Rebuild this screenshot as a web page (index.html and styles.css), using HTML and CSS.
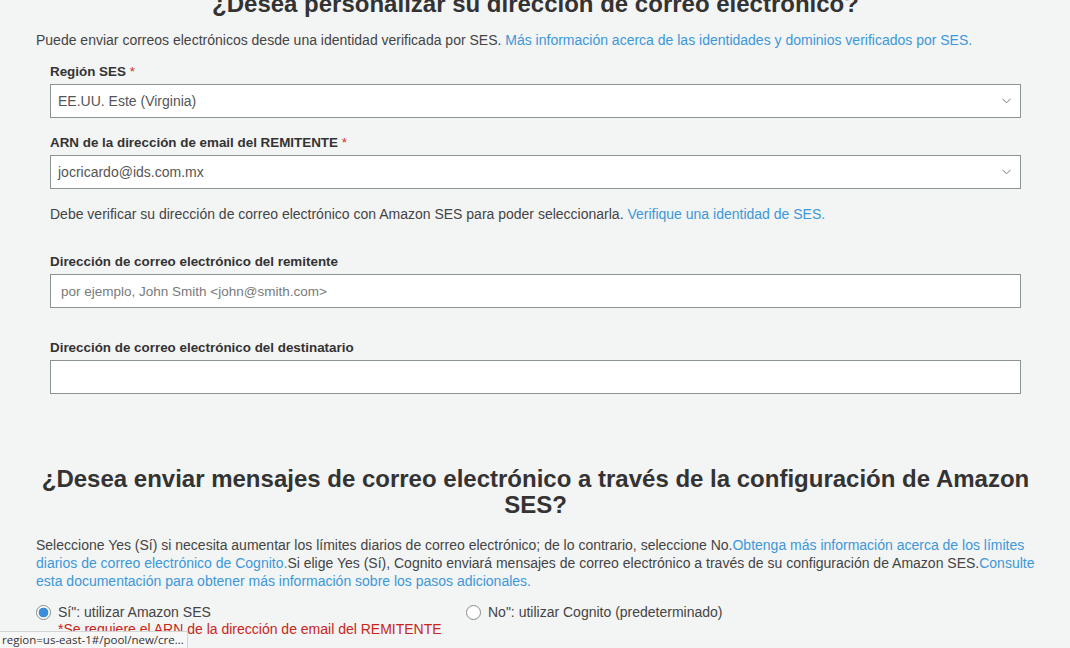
FILE: index.html
```html
<!DOCTYPE html>
<html lang="es">
<head>
<meta charset="utf-8">
<title>Cognito - correo electrónico</title>
<link rel="stylesheet" href="styles.css">
</head>
<body>
<div class="page">
  <section class="sec sec-custom">
    <h2 class="sec-title">¿Desea personalizar su dirección de correo electrónico?</h2>
    <p class="desc">Puede enviar correos electrónicos desde una identidad verificada por SES. <a class="link" href="#">Más información acerca de las identidades y dominios verificados por SES.</a></p>
    <div class="fields">
      <div class="field">
        <label class="label">Región SES <span class="req">*</span></label>
        <div class="control select">
          <span class="value">EE.UU. Este (Virginia)</span>
          <svg class="chev" width="9" height="6" viewBox="0 0 9 6"><polyline points="0.5,0.8 4.5,4.8 8.5,0.8" fill="none" stroke="#777" stroke-width="1"/></svg>
        </div>
      </div>
      <div class="field">
        <label class="label">ARN de la dirección de email del REMITENTE <span class="req">*</span></label>
        <div class="control select">
          <span class="value">jocricardo@ids.com.mx</span>
          <svg class="chev" width="9" height="6" viewBox="0 0 9 6"><polyline points="0.5,0.8 4.5,4.8 8.5,0.8" fill="none" stroke="#777" stroke-width="1"/></svg>
        </div>
      </div>
      <p class="help">Debe verificar su dirección de correo electrónico con Amazon SES para poder seleccionarla. <a class="link" href="#">Verifique una identidad de SES.</a></p>
      <div class="field field-wide">
        <label class="label">Dirección de correo electrónico del remitente</label>
        <input class="control input" type="text" placeholder="por ejemplo, John Smith &lt;john@smith.com&gt;">
      </div>
      <div class="field field-wide">
        <label class="label">Dirección de correo electrónico del destinatario</label>
        <input class="control input" type="text">
      </div>
    </div>
  </section>

  <section class="sec sec-ses">
    <h2 class="sec-title">¿Desea enviar mensajes de correo electrónico a través de la configuración de Amazon SES?</h2>
    <p class="desc desc-long">Seleccione Yes (Sí) si necesita aumentar los límites diarios de correo electrónico; de lo contrario, seleccione No.<a class="link" href="#">Obtenga más información acerca de los límites diarios de correo electrónico de Cognito.</a>Si elige Yes (Sí), Cognito enviará mensajes de correo electrónico a través de su configuración de Amazon SES.<a class="link" href="#">Consulte esta documentación para obtener más información sobre los pasos adicionales.</a></p>
    <div class="radios">
      <div class="radio-col radio-col-first">
        <label class="radio"><input type="radio" name="ses" checked><span>Sí": utilizar Amazon SES</span></label>
        <div class="error">*Se requiere el ARN de la dirección de email del REMITENTE</div>
      </div>
      <div class="radio-col">
        <label class="radio"><input type="radio" name="ses"><span>No": utilizar Cognito (predeterminado)</span></label>
      </div>
    </div>
  </section>
</div>
<div class="status">region=us-east-1#/pool/new/cre...</div>
</body>
</html>
```

FILE: styles.css
```css
html, body {
  margin: 0;
  padding: 0;
  background: #f3f4f4;
  height: 100%;
  overflow: hidden;
}

body {
  font-family: "Liberation Sans", Arial, sans-serif;
  color: #444;
  font-size: 14px;
}

.page {
  padding: 0 35px 0 36px;
  margin-top: -9px;
}

.sec-title {
  margin: 0;
  font-size: 24px;
  line-height: 26px;
  font-weight: bold;
  color: #333;
  text-align: center;
}

.desc {
  margin: 14px 0 0;
  line-height: 18px;
  color: #444;
}

.link {
  color: #3c98d8;
  text-decoration: none;
}

.fields {
  padding: 0 14px;
  margin-top: 14px;
}

.field {
  display: flex;
  flex-direction: column;
  margin-bottom: 16px;
}

.field-wide {
  margin-bottom: 31px;
}

.label {
  font-weight: bold;
  font-size: 13.4px;
  line-height: 18px;
  color: #333;
  margin-bottom: 3px;
}

.req {
  color: #d13212;
  font-weight: normal;
}

.control {
  box-sizing: border-box;
  height: 34px;
  border: 1px solid #8b9394;
  background: #fff;
  font-family: "Liberation Sans", Arial, sans-serif;
  font-size: 14px;
  color: #555;
}

.select {
  display: flex;
  align-items: center;
  justify-content: space-between;
  padding: 0 9px 0 7px;
}

.chev {
  display: block;
}

.input {
  width: 100%;
  padding: 0 10px;
  outline: none;
}

.input::placeholder {
  color: #7a7a7a;
  font-size: 13.5px;
}

.help {
  margin: 0 0 30px;
  line-height: 18px;
}

.sec-ses {
  margin-top: 72px;
}

.sec-ses .desc {
  margin-top: 18px;
}

.radios {
  display: flex;
  margin-top: 13px;
}

.radio-col-first {
  width: 430px;
}

.radio {
  display: flex;
  align-items: center;
  gap: 7px;
  line-height: 18px;
}

.radio input {
  appearance: none;
  -webkit-appearance: none;
  margin: 0;
  width: 15px;
  height: 15px;
  border: 1px solid #8a8a8a;
  border-radius: 50%;
  background: #fff;
  box-sizing: border-box;
}

.radio input:checked {
  background: radial-gradient(circle, #3b8edb 0 4.6px, #fff 5.2px);
}

.error {
  color: #c7261b;
  padding-left: 22px;
  line-height: 17px;
}

.status {
  position: fixed;
  left: 0;
  bottom: 0;
  width: 188px;
  height: 17px;
  box-sizing: border-box;
  background: #f7f7f7;
  border-top: 1px solid #d4d4d4;
  border-right: 1px solid #d4d4d4;
  font-family: "Open Sans", "Liberation Sans", sans-serif;
  font-size: 11.5px;
  line-height: 15px;
  color: #333;
  padding-left: 2px;
  white-space: nowrap;
  overflow: hidden;
}
```
